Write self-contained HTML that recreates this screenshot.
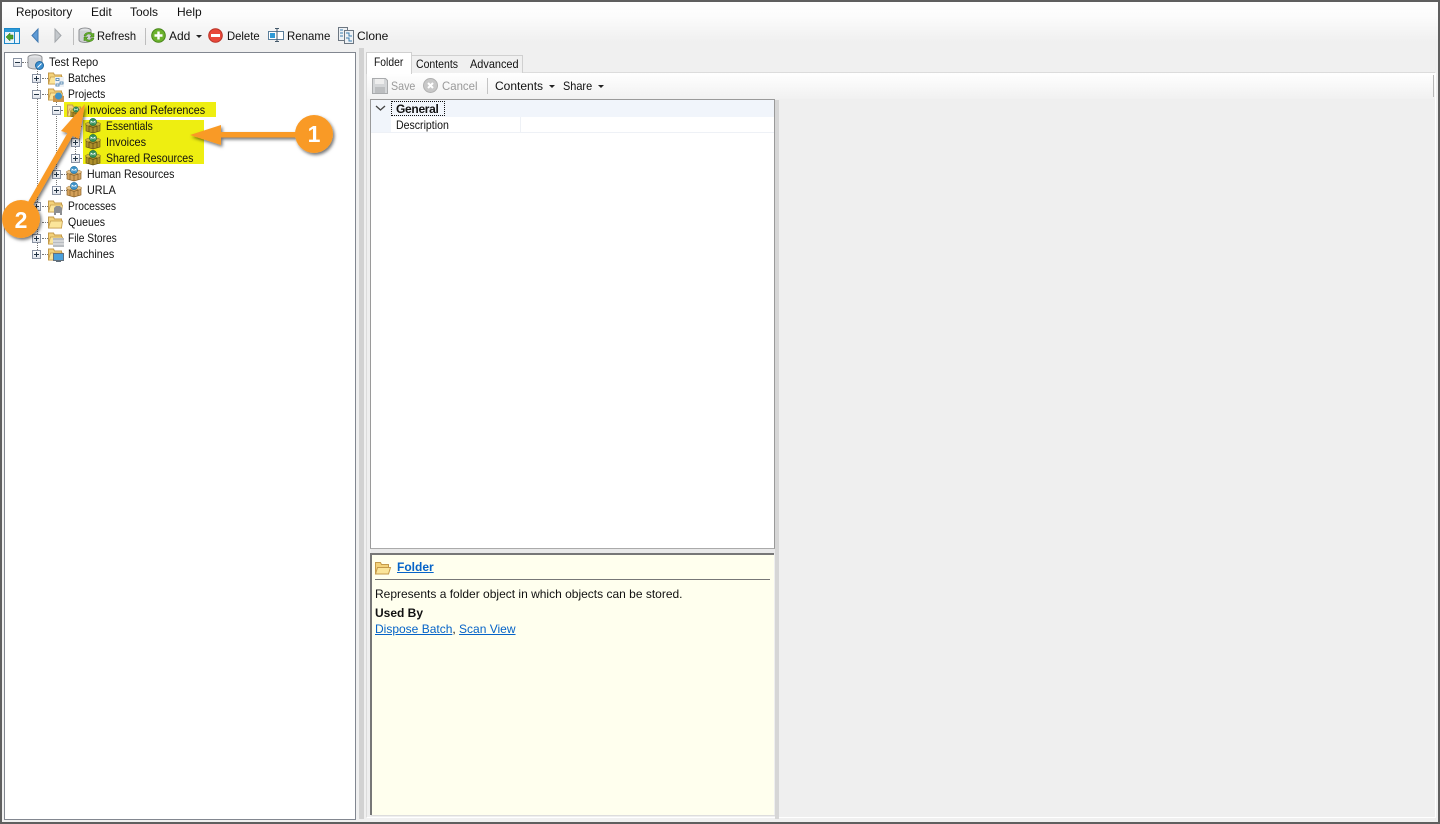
<!DOCTYPE html>
<html><head><meta charset="utf-8"><title>Repository</title>
<style>
html,body{margin:0;padding:0;width:1440px;height:824px;overflow:hidden;background:#f0f0f0}
body{position:relative;font-family:"Liberation Sans",sans-serif;font-size:12px;color:#111}
.a{position:absolute}
.t{position:absolute;white-space:nowrap;line-height:14px;height:14px;transform-origin:0 50%}
.h{position:absolute;background:#eeee11}
svg.i{position:absolute;overflow:visible}
.pm{position:absolute;width:7px;height:7px;border:1px solid #8a93a3;background:linear-gradient(#fff,#dfe3ea)}
.pm:before{content:"";position:absolute;left:1px;top:3px;width:5px;height:1px;background:#234}
.pm.p:after{content:"";position:absolute;left:3px;top:1px;width:1px;height:5px;background:#234}
.dh{position:absolute;height:0;border-top:1px dotted #777}
.dv{position:absolute;width:0;border-left:1px dotted #777}
a{color:#0563c8;text-decoration:underline}
</style></head><body>
<svg width="0" height="0" style="position:absolute"><defs>
<symbol id="folder" viewBox="0 0 16 16"><path d="M1 14V3h5l1 2h7v9z" fill="#f3d27a" stroke="#c59a4a"/><path d="M1 14l2-7h12l-1 7z" fill="#fbe59a" stroke="#c59a4a" stroke-width=".8"/></symbol>
<symbol id="box" viewBox="0 0 16 16"><path d="M1 7l7-2 7 2v6l-7 2-7-2z" fill="#d3a05a" stroke="#8f672d" stroke-width=".7"/><path d="M1 7l7 2.500L15 7M8 9.500V15M4 8.500v5M12 8.500v5" fill="none" stroke="#8a6228" stroke-width=".7"/><path d="M0 6l3-2 5 2 5-2 3 2-3 2-5-2-5 2z" fill="#e8c48c" stroke="#a57a3c" stroke-width=".5"/><circle cx="8" cy="4" r="3.600" fill="#3c93c9" stroke="#1d6b9c" stroke-width=".6"/><path d="M6 5.400V3l2 1.400L10 3v2.400" fill="none" stroke="#fff" stroke-width=".7"/></symbol>
<symbol id="boxg" viewBox="0 0 16 16"><path d="M1 7l7-2 7 2v6l-7 2-7-2z" fill="#ad8f2a" stroke="#6d5a18" stroke-width=".7"/><path d="M1 7l7 2.500L15 7M8 9.500V15M4 8.500v5M12 8.500v5" fill="none" stroke="#5f4d12" stroke-width=".7"/><path d="M0 6l3-2 5 2 5-2 3 2-3 2-5-2-5 2z" fill="#cdb63e" stroke="#86721c" stroke-width=".5"/><circle cx="8" cy="4" r="3.600" fill="#35905a" stroke="#1c6a3c" stroke-width=".6"/><path d="M6 5.400V3l2 1.400L10 3v2.400" fill="none" stroke="#fff" stroke-width=".7"/></symbol>
</defs></svg>

<!-- menu + toolbar gradient -->
<div class="a" style="left:0;top:0;width:1440px;height:48px;background:linear-gradient(#fff 0,#fcfcfc 16px,#f0f0f0 42px)"></div>

<span class="t" style="left:16px;top:5px;transform:scaleX(.98)">Repository</span>
<span class="t" style="left:91px;top:5px">Edit</span>
<span class="t" style="left:130px;top:5px">Tools</span>
<span class="t" style="left:177px;top:5px">Help</span>

<!-- toolbar icons -->
<svg class="i" style="left:4px;top:28px" width="16" height="16" viewBox="0 0 16 16"><rect x=".5" y=".5" width="15" height="15" fill="#e8f3fb" stroke="#1e88c8"/><rect x="1" y="1" width="14" height="3" fill="#2b9ad8"/><rect x="10" y="4" width="1" height="11" fill="#1e88c8"/><path d="M2 9l4-4v2h3v4H6v2z" fill="#4aa02c" stroke="#2c7016" stroke-width=".5"/></svg>
<svg class="i" style="left:30px;top:28px" width="10" height="16" viewBox="0 0 10 16"><path d="M8 1v13L2 7.500z" fill="#5e9bd6" stroke="#3f78b0"/></svg>
<svg class="i" style="left:53px;top:28px" width="10" height="16" viewBox="0 0 10 16"><path d="M2 1v13l6-6.500z" fill="#c4c8cc" stroke="#a2a6aa"/></svg>
<div class="a" style="left:73px;top:28px;width:1px;height:17px;background:#bdbdbd"></div>
<svg class="i" style="left:78px;top:27px" width="17" height="17" viewBox="0 0 17 17"><ellipse cx="7" cy="3.500" rx="6" ry="2.500" fill="#e2e4e6" stroke="#8d8f92"/><path d="M1 3.500V13c0 1.500 3 2.500 6 2.500s6-1 6-2.500V3.500" fill="#cfd1d4" stroke="#8d8f92"/><path d="M6 9a5 4 0 0 1 9-2l1-1v4h-4l1.500-1.500A3 3 0 0 0 8 9z" fill="#63ad2c" stroke="#3f7f16" stroke-width=".5"/><path d="M16 11a5 4 0 0 1-9 2l-1 1v-4h4l-1.500 1.500A3 3 0 0 0 14 11z" fill="#63ad2c" stroke="#3f7f16" stroke-width=".5"/></svg>
<span class="t" style="left:97px;top:29px;transform:scaleX(.93)">Refresh</span>
<div class="a" style="left:145px;top:28px;width:1px;height:17px;background:#bdbdbd"></div>
<svg class="i" style="left:151px;top:28px" width="15" height="15" viewBox="0 0 15 15"><circle cx="7.500" cy="7.500" r="6.800" fill="#6cb22c" stroke="#47861a"/><path d="M7.500 3.500v8M3.500 7.500h8" stroke="#fff" stroke-width="2.400"/></svg>
<span class="t" style="left:169px;top:29px">Add</span>
<div class="a" style="left:196px;top:35px;border:3px solid transparent;border-top:3px solid #222;border-bottom:0"></div>
<svg class="i" style="left:208px;top:28px" width="15" height="15" viewBox="0 0 15 15"><circle cx="7.500" cy="7.500" r="6.800" fill="#e8483a" stroke="#b93226"/><rect x="3" y="6" width="9" height="3" fill="#fff"/></svg>
<span class="t" style="left:227px;top:29px;transform:scaleX(.94)">Delete</span>
<svg class="i" style="left:268px;top:27px" width="17" height="17" viewBox="0 0 17 17"><rect x=".5" y="4.500" width="15" height="8" fill="#fff" stroke="#5b7e9a"/><rect x="2" y="6" width="5" height="5" fill="#2f9ad6"/><path d="M9 1.500v13M7 1.500h4M7 14.500h4" stroke="#44586a" fill="none"/></svg>
<span class="t" style="left:287px;top:29px;transform:scaleX(.955)">Rename</span>
<svg class="i" style="left:338px;top:27px" width="17" height="17" viewBox="0 0 17 17"><rect x=".5" y=".5" width="9" height="13" fill="#eef1f4" stroke="#6c7681"/><rect x="6.500" y="3.500" width="9" height="13" fill="#eef1f4" stroke="#6c7681"/><path d="M2 3h3M2 6h3M2 9h3M8 6h3v3h3M8 11h3v3h3" stroke="#3a7db0" fill="none"/></svg>
<span class="t" style="left:357px;top:29px">Clone</span>

<!-- tree panel -->
<div class="a" style="left:4px;top:52px;width:350px;height:766px;background:#fff;border:1px solid #828790"></div>
<div class="dv" style="left:37px;top:67px;height:187px"></div>
<div class="dv" style="left:56px;top:99px;height:90px"></div>
<div class="dv" style="left:75px;top:115px;height:43px"></div>
<div class="dh" style="left:22px;top:62px;width:8px"></div>
<div class="dh" style="left:42px;top:78px;width:6px"></div>
<div class="dh" style="left:42px;top:94px;width:6px"></div>
<div class="dh" style="left:61px;top:110px;width:6px"></div>
<div class="dh" style="left:76px;top:126px;width:10px"></div>
<div class="dh" style="left:76px;top:142px;width:10px"></div>
<div class="dh" style="left:80px;top:158px;width:6px"></div>
<div class="dh" style="left:61px;top:174px;width:6px"></div>
<div class="dh" style="left:61px;top:190px;width:6px"></div>
<div class="dh" style="left:42px;top:206px;width:6px"></div>
<div class="dh" style="left:42px;top:222px;width:6px"></div>
<div class="dh" style="left:42px;top:238px;width:6px"></div>
<div class="dh" style="left:42px;top:254px;width:6px"></div>

<div class="h" style="left:64px;top:102px;width:152px;height:15px"></div>
<div class="h" style="left:83px;top:120px;width:121px;height:44px"></div>

<i class="pm" style="left:13px;top:58px"></i>
<i class="pm p" style="left:32px;top:74px"></i>
<i class="pm" style="left:32px;top:90px"></i>
<i class="pm" style="left:52px;top:106px"></i>
<i class="pm p" style="left:71px;top:122px"></i>
<i class="pm p" style="left:71px;top:138px"></i>
<i class="pm p" style="left:71px;top:154px"></i>
<i class="pm p" style="left:52px;top:170px"></i>
<i class="pm p" style="left:52px;top:186px"></i>
<i class="pm p" style="left:32px;top:202px"></i>
<i class="pm p" style="left:32px;top:234px"></i>
<i class="pm p" style="left:32px;top:250px"></i>

<svg class="i" style="left:27px;top:54px" width="18" height="17" viewBox="0 0 18 17"><ellipse cx="8" cy="3.500" rx="7" ry="2.800" fill="#e4e5e7" stroke="#8f9194"/><path d="M1 3.500V12c0 1.800 3.500 3 7 3s7-1.200 7-3V3.500" fill="#d2d4d7" stroke="#8f9194"/><circle cx="12.500" cy="11.500" r="4" fill="#3b8fd0" stroke="#22689f"/><path d="M10.500 13.500l4-4" stroke="#fff"/></svg>
<svg class="i" style="left:47px;top:70px" width="17" height="16"><use href="#folder"/></svg>
<svg class="i" style="left:55px;top:77px" width="9" height="10" viewBox="0 0 9 10"><rect x="0" y="0" width="9" height="10" fill="#eef2f6"/><path d="M1 1.500h3v2H1zM5 5h3v2H5zM1 7h3v2H1z" fill="#fff" stroke="#3f78a8" stroke-width=".8"/></svg>
<svg class="i" style="left:47px;top:86px" width="17" height="16"><use href="#folder"/></svg>
<svg class="i" style="left:53px;top:92px" width="11" height="11" viewBox="0 0 11 11"><path d="M0 4l5-2 6 2v6H0z" fill="#c9934a"/><circle cx="5.500" cy="4" r="3.500" fill="#3c93c9"/></svg>
<svg class="i" style="left:66px;top:102px" width="17" height="16"><use href="#folder"/></svg>
<svg class="i" style="left:70px;top:106px" width="12" height="13" viewBox="0 0 16 16"><use href="#boxg"/></svg>
<svg class="i" style="left:85px;top:118px" width="16" height="16"><use href="#boxg"/></svg>
<svg class="i" style="left:85px;top:134px" width="16" height="16"><use href="#boxg"/></svg>
<svg class="i" style="left:85px;top:150px" width="16" height="16"><use href="#boxg"/></svg>
<svg class="i" style="left:66px;top:166px" width="16" height="16"><use href="#box"/></svg>
<svg class="i" style="left:66px;top:182px" width="16" height="16"><use href="#box"/></svg>
<svg class="i" style="left:47px;top:198px" width="17" height="16"><use href="#folder"/></svg>
<svg class="i" style="left:53px;top:205px" width="10" height="10" viewBox="0 0 10 10"><path d="M1 10V3l2-2h4l2 2v7H7V8H3v2z" fill="#8d8f92"/></svg>
<svg class="i" style="left:47px;top:214px" width="17" height="16"><use href="#folder"/></svg>
<svg class="i" style="left:47px;top:230px" width="17" height="16"><use href="#folder"/></svg>
<svg class="i" style="left:53px;top:238px" width="11" height="9" viewBox="0 0 11 9"><rect width="11" height="9" fill="#b8bcc0"/><path d="M0 3h11M0 6h11" stroke="#eee"/></svg>
<svg class="i" style="left:47px;top:246px" width="17" height="16"><use href="#folder"/></svg>
<svg class="i" style="left:53px;top:253px" width="11" height="9" viewBox="0 0 11 9"><rect x=".5" y=".5" width="10" height="7" fill="#4aa0dc" stroke="#62707c"/><rect x="3" y="8" width="5" height="1" fill="#62707c"/></svg>

<span class="t" style="left:49px;top:55px;transform:scaleX(.91)">Test Repo</span>
<span class="t" style="left:68px;top:71px;transform:scaleX(.865)">Batches</span>
<span class="t" style="left:68px;top:87px;transform:scaleX(.86)">Projects</span>
<span class="t" style="left:87px;top:103px;transform:scaleX(.894)">Invoices and References</span>
<span class="t" style="left:106px;top:119px;transform:scaleX(.855)">Essentials</span>
<span class="t" style="left:106px;top:135px;transform:scaleX(.91)">Invoices</span>
<span class="t" style="left:106px;top:151px;transform:scaleX(.88)">Shared Resources</span>
<span class="t" style="left:87px;top:167px;transform:scaleX(.88)">Human Resources</span>
<span class="t" style="left:87px;top:183px;transform:scaleX(.9)">URLA</span>
<span class="t" style="left:68px;top:199px;transform:scaleX(.857)">Processes</span>
<span class="t" style="left:68px;top:215px;transform:scaleX(.88)">Queues</span>
<span class="t" style="left:68px;top:231px;transform:scaleX(.85)">File Stores</span>
<span class="t" style="left:68px;top:247px;transform:scaleX(.9)">Machines</span>

<!-- splitter -->
<div class="a" style="left:359px;top:48px;width:5px;height:771px;background:#d2d2d2"></div>

<!-- right frame -->
<div class="a" style="left:366px;top:72px;border:1px solid #dcdcdc;border-right:1px solid #fff;border-bottom:1px solid #fff;background:#efefef;box-sizing:border-box;width:1070px;height:746px"></div>
<div class="a" style="left:367px;top:73px;width:1068px;height:26px;background:linear-gradient(#fff,#f1f1f1)"></div>
<div class="a" style="left:1433px;top:75px;width:1px;height:22px;background:#b8b8b8"></div>

<!-- tabs -->
<div class="a" style="left:411px;top:55px;width:52px;height:17px;background:#f0f0f0;border:1px solid #d0d0d0;border-bottom:0"></div>
<div class="a" style="left:464px;top:55px;width:58px;height:17px;background:#f0f0f0;border:1px solid #d0d0d0;border-bottom:0;border-left:0"></div>
<div class="a" style="left:366px;top:52px;width:44px;height:21px;background:#fff;border:1px solid #d0d0d0;border-bottom:0"></div>
<span class="t" style="left:374px;top:55px;transform:scaleX(.86)">Folder</span>
<span class="t" style="left:416px;top:57px;transform:scaleX(.875)">Contents</span>
<span class="t" style="left:470px;top:57px;transform:scaleX(.91)">Advanced</span>

<!-- inner toolbar -->
<svg class="i" style="left:372px;top:78px" width="16" height="16" viewBox="0 0 16 16"><path d="M.5.500h13l2 2v13H.5z" fill="#d4d6d8" stroke="#a9abad"/><rect x="3" y="1" width="9" height="5" fill="#eee"/><rect x="3" y="9" width="10" height="6" fill="#bcbec0"/></svg>
<span class="t" style="left:391px;top:79px;color:#9a9a9a;transform:scaleX(.89)">Save</span>
<svg class="i" style="left:423px;top:78px" width="15" height="15" viewBox="0 0 15 15"><circle cx="7.500" cy="7.500" r="7" fill="#c8c8c8" stroke="#b0b0b0"/><path d="M5 5l5 5M10 5l-5 5" stroke="#fff" stroke-width="2"/></svg>
<span class="t" style="left:442px;top:79px;color:#9a9a9a;transform:scaleX(.95)">Cancel</span>
<div class="a" style="left:487px;top:78px;width:1px;height:16px;background:#c4c4c4"></div>
<span class="t" style="left:495px;top:79px">Contents</span>
<div class="a" style="left:549px;top:85px;border:3px solid transparent;border-top:3px solid #222;border-bottom:0"></div>
<span class="t" style="left:563px;top:79px;transform:scaleX(.91)">Share</span>
<div class="a" style="left:598px;top:85px;border:3px solid transparent;border-top:3px solid #222;border-bottom:0"></div>

<!-- property grid -->
<div class="a" style="left:370px;top:99px;width:403px;height:448px;background:#fff;border:1px solid #9a9a9a;border-bottom:1px solid #aaa"></div>
<div class="a" style="left:371px;top:100px;width:403px;height:17px;background:#f1f5fb"></div>
<div class="a" style="left:371px;top:117px;width:20px;height:16px;background:#f1f5fb"></div>
<div class="a" style="left:371px;top:132px;width:403px;height:1px;background:#eef1f6"></div>
<div class="a" style="left:520px;top:117px;width:1px;height:16px;background:#eef1f6"></div>
<svg class="i" style="left:375px;top:105px" width="11" height="7" viewBox="0 0 11 7"><path d="M1 1l4.500 4L10 1" fill="none" stroke="#444" stroke-width="1.300"/></svg>
<div class="a" style="left:391px;top:101px;width:52px;height:13px;border:1px dotted #111;box-sizing:content-box"></div>
<span class="t" style="left:396px;top:102px;font-weight:bold;letter-spacing:-.3px">General</span>
<span class="t" style="left:396px;top:118px;transform:scaleX(.88)">Description</span>
<div class="a" style="left:775px;top:100px;width:4px;height:719px;background:#d6d6d6"></div>

<!-- help pane -->
<div class="a" style="left:371px;top:549px;width:404px;height:5px;background:#e9e9e9"></div>
<div class="a" style="left:370px;top:553px;background:#ffffee;border-left:2px solid #777;border-top:2px solid #777;box-sizing:border-box;width:404px;height:262px"></div>
<div class="a" style="left:371px;top:815px;width:404px;height:1px;background:#ddd"></div>
<svg class="i" style="left:375px;top:561px" width="16" height="14" viewBox="0 0 16 14"><path d="M.5 13V1.500h5l1 2h7V13z" fill="#f3d27a" stroke="#c59a4a"/><path d="M.5 13l2-6.500h13L13.500 13z" fill="#fbe59a" stroke="#c59a4a"/></svg>
<a class="t" style="left:397px;top:560px;font-weight:bold">Folder</a>
<div class="a" style="left:375px;top:579px;width:395px;height:1px;background:#777"></div>
<span class="t" style="left:375px;top:587px">Represents a folder object in which objects can be stored.</span>
<span class="t" style="left:375px;top:606px;font-weight:bold">Used By</span>
<span class="t" style="left:375px;top:622px"><a>Dispose Batch</a>, <a>Scan View</a></span>

<!-- annotations -->
<svg class="i" style="left:0;top:0;z-index:5" width="1440" height="824" viewBox="0 0 1440 824">
<defs><filter id="sh" x="-30%" y="-30%" width="160%" height="160%"><feDropShadow dx="1.500" dy="2" stdDeviation="1.500" flood-color="#000" flood-opacity=".55"/></filter></defs>
<g filter="url(#sh)" fill="#f99a25">
<path d="M190 135l31-10v7h80v5.500h-80v7.500z"/>
<circle cx="314" cy="134" r="19"/>
<path d="M85 104L79 139L72.500 136L33 205L28 202L67.500 133L61 131z"/>
<circle cx="21" cy="219" r="19"/>
</g>
<text x="314" y="142" text-anchor="middle" font-family="Liberation Sans, sans-serif" font-size="23" font-weight="bold" fill="#fff">1</text>
<text x="21" y="228" text-anchor="middle" font-family="Liberation Sans, sans-serif" font-size="23" font-weight="bold" fill="#fff">2</text>
</svg>

<!-- outer screenshot border -->
<div class="a" style="left:0;top:0;width:1440px;height:824px;box-sizing:border-box;border:2px solid #5f5f5f;z-index:6;pointer-events:none"></div>
</body></html>
